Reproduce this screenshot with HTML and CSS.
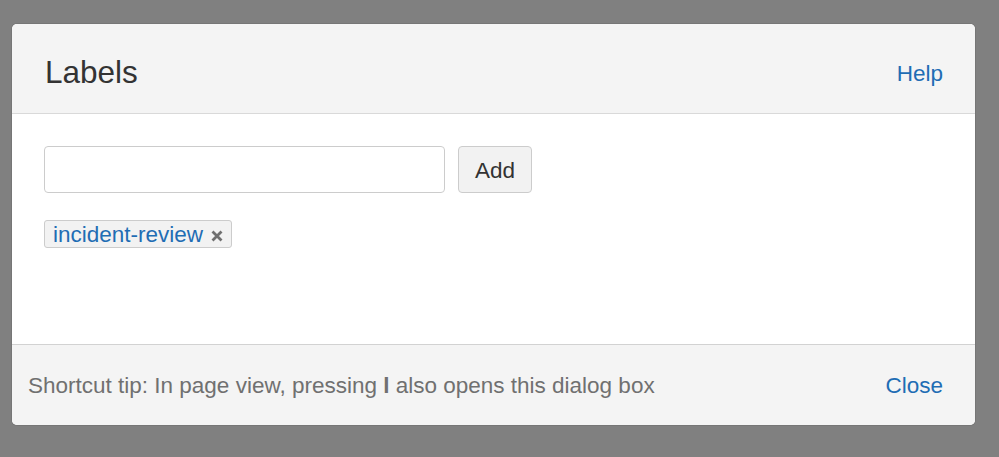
FILE: index.html
```html
<!DOCTYPE html>
<html>
<head>
<meta charset="utf-8">
<link rel="stylesheet" href="styles.css">
</head>
<body>
<div class="dialog">
  <div class="dialog-header">
    <h2 class="dialog-title">Labels</h2>
    <a class="link help-link">Help</a>
  </div>
  <div class="dialog-body">
    <div class="add-row">
      <input class="label-input" type="text">
      <button class="add-btn">Add</button>
    </div>
    <div class="labels">
      <span class="tag"><a class="tag-text">incident-review</a><svg class="tag-remove" width="12" height="12" viewBox="0 0 12 12"><path d="M1.5 1.5 L10.5 10.5 M10.5 1.5 L1.5 10.5" stroke="#6f6f6f" stroke-width="2.8" fill="none"/></svg></span>
    </div>
  </div>
  <div class="dialog-footer">
    <span class="tip">Shortcut tip: In page view, pressing <b>l</b> also opens this dialog box</span>
    <a class="link close-link">Close</a>
  </div>
</div>
</body>
</html>
```

FILE: styles.css
```css
html, body {
  margin: 0;
  height: 100%;
}
body {
  background: #808080;
  font-family: "Liberation Sans", Arial, sans-serif;
  padding: 24px 24px 0 12px;
  box-sizing: border-box;
}
.dialog {
  width: 963px;
  height: 401px;
  background: #fff;
  border-radius: 5px;
  overflow: hidden;
  display: flex;
  flex-direction: column;
  box-shadow: 0 0 0 1px rgba(0,0,0,0.08);
}
.dialog-header {
  height: 89px;
  background: #f4f4f4;
  border-bottom: 1px solid #d9d9d9;
  display: flex;
  align-items: center;
  justify-content: space-between;
  padding: 0 32px 0 33px;
  flex-shrink: 0;
}
.dialog-title {
  margin: 0;
  font-weight: normal;
  font-size: 31.5px;
  color: #333;
  padding-top: 8px;
}
.link {
  color: #1f6db4;
  font-size: 22.5px;
  cursor: pointer;
}
.help-link {
  padding-top: 11px;
}
.dialog-body {
  flex: 1;
  padding: 32px 32px 0 32px;
}
.add-row {
  display: flex;
  gap: 13px;
}
.label-input {
  width: 401px;
  height: 47px;
  box-sizing: border-box;
  border: 1px solid #cccccc;
  border-radius: 4px;
  margin: 0;
  background: #fff;
}
.add-btn {
  width: 74px;
  height: 47px;
  box-sizing: border-box;
  border: 1px solid #cccccc;
  border-radius: 4px;
  background: #f2f2f2;
  font-family: "Liberation Sans", Arial, sans-serif;
  font-size: 22.5px;
  color: #333;
  margin: 0;
  padding: 2px 0 0 0;
}
.labels {
  margin-top: 27px;
  display: flex;
}
.tag {
  display: inline-flex;
  align-items: center;
  height: 28px;
  box-sizing: border-box;
  border: 1px solid #cccccc;
  border-radius: 3px;
  background: #f2f2f2;
  padding: 0 8px 0 8px;
}
.tag-text {
  color: #1f6db4;
  font-size: 22.5px;
  line-height: 1;
  padding-top: 3px;
}
.tag-remove {
  margin-left: 8px;
  margin-top: 3px;
  display: block;
}
.dialog-footer {
  height: 80px;
  background: #f4f4f4;
  border-top: 1px solid #d2d2d2;
  display: flex;
  align-items: center;
  justify-content: space-between;
  padding: 0 32px 0 16px;
  flex-shrink: 0;
}
.tip {
  color: #707070;
  font-size: 22.5px;
  padding-top: 2px;
}
.tip b {
  font-weight: bold;
}
.close-link {
  padding-top: 2px;
}
```
